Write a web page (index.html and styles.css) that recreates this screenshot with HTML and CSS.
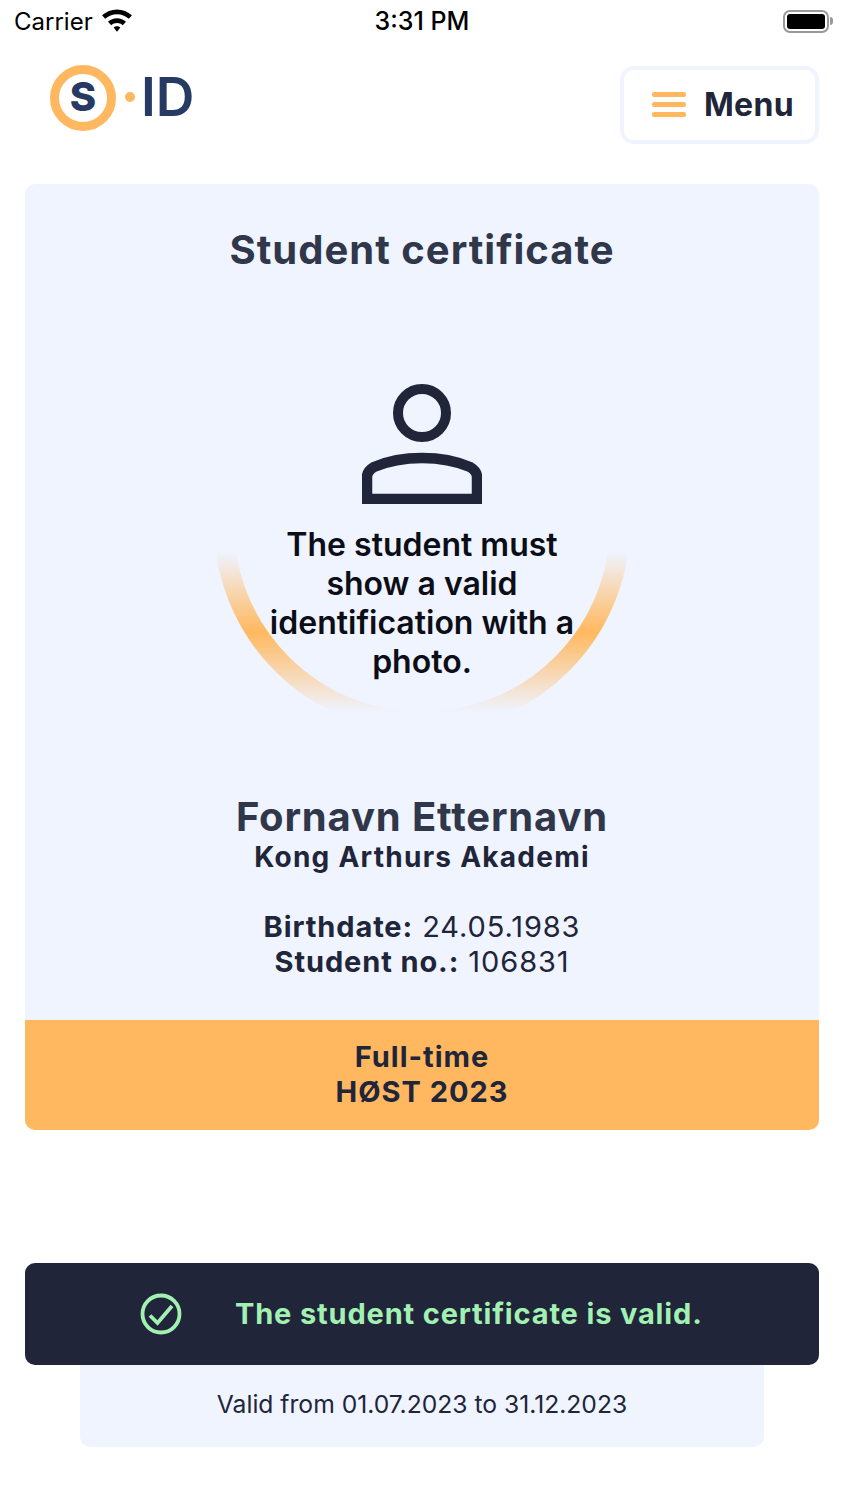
FILE: index.html
```html
<!DOCTYPE html>
<html lang="en">
<head>
    <meta charset="UTF-8">
    <meta name="viewport" content="width=device-width, initial-scale=1.0">
    <title>Student certificate</title>
    <link rel="stylesheet" href="styles.css">
</head>
<body>
    <!-- Status bar -->
    <div class="status-bar">
        <div class="status-left">
            <span class="carrier">Carrier</span>
            <svg class="wifi" width="36" height="27" viewBox="0 0 32 24">
                <path d="M16 3c5 0 9.700 2 13.300 5.300l-2.800 3.100c-2.800-2.600-6.500-4.100-10.500-4.100s-7.700 1.500-10.500 4.100L2.700 8.300C6.300 5 11 3 16 3z" fill="#000"/>
                <path d="M16 10.800c3 0 5.800 1.100 8 3.100l-2.900 3.100c-1.300-1.200-3.100-2-5.100-2s-3.800.8-5.100 2L8 13.900c2.200-2 5-3.100 8-3.100z" fill="#000"/>
                <path d="M16 18c1.100 0 2.200.4 3 1.100L16 22.800l-3-3.700c.8-.7 1.900-1.100 3-1.100z" fill="#000"/>
            </svg>
        </div>
        <span class="time">3:31 PM</span>
        <div class="battery">
            <div class="battery-body"><div class="battery-fill"></div></div>
            <div class="battery-cap"></div>
        </div>
    </div>

    <!-- Logo and menu -->
    <header class="top-bar">
        <svg class="logo" width="146" height="68" viewBox="0 0 146 68">
            <circle cx="34" cy="34" r="28.500" fill="none" stroke="#ffb85f" stroke-width="9"/>
            <text x="34" y="47" text-anchor="middle" class="logo-s">S</text>
            <circle cx="81" cy="33" r="5" fill="#ffb85f"/>
            <text x="92" y="52" class="logo-id">ID</text>
        </svg>
        <button class="menu-btn">
            <span class="burger"><i></i><i></i><i></i></span>
            <span>Menu</span>
        </button>
    </header>

    <main class="content">
        <section class="card">
            <h1>Student certificate</h1>

            <div class="portrait">
                <svg class="arc" width="424" height="180" viewBox="0 0 424 180">
                    <defs>
                        <linearGradient id="arcFade" x1="0" y1="0" x2="0" y2="1">
                            <stop offset="0" stop-color="#ffb85f" stop-opacity="0"/>
                            <stop offset="0.5" stop-color="#ffb85f" stop-opacity="1"/>
                            <stop offset="1" stop-color="#ffb85f" stop-opacity="0"/>
                        </linearGradient>
                        <mask id="arcRing">
                            <circle cx="212" cy="-28" r="198" fill="none" stroke="#fff" stroke-width="20"/>
                        </mask>
                    </defs>
                    <rect x="0" y="0" width="424" height="160" fill="url(#arcFade)" mask="url(#arcRing)"/>
                </svg>
                <svg class="person" width="120" height="120" viewBox="0 0 120 120">
                    <circle cx="60" cy="29" r="24" fill="none" stroke="#20253a" stroke-width="10"/>
                    <path d="M5 115V93c0-4 2-7 7-10C26 77 43 74 60 74s34 3 48 9c5 3 7 6 7 10v22z" fill="none" stroke="#20253a" stroke-width="10.500"/>
                </svg>
                <p class="notice">The student must show a valid identification with a photo.</p>
            </div>

            <div class="student">
                <h2>Fornavn Etternavn</h2>
                <div class="school">Kong Arthurs Akademi</div>
                <div class="facts">
                    <div><b>Birthdate:</b> 24.05.1983</div>
                    <div><b>Student no.:</b> 106831</div>
                </div>
            </div>

            <div class="term">
                <div>Full-time</div>
                <div>HØST 2023</div>
            </div>
        </section>

        <div class="valid-banner">
            <svg width="44" height="44" viewBox="0 0 44 44">
                <circle cx="22" cy="22" r="18.500" fill="none" stroke="#a3f1b2" stroke-width="3.800"/>
                <path d="M11 23.500l7.500 7.500L33 14" fill="none" stroke="#a3f1b2" stroke-width="3.800"/>
            </svg>
            <span>The student certificate is valid.</span>
        </div>
        <div class="valid-dates">Valid from 01.07.2023 to 31.12.2023</div>
    </main>
</body>
</html>
```

FILE: styles.css
```css
html, body {
    margin: 0;
    width: 844px;
    height: 1500px;
    background-color: white;
    font-family: Inter, "Noto Sans", sans-serif;
    color: #20253a;
    overflow: hidden;
}

.status-bar {
    display: grid;
    grid-template-columns: 1fr auto 1fr;
    align-items: center;
    height: 42px;
    padding: 0 14px;
    color: black;
}

.status-left {
    display: flex;
    align-items: center;
    gap: 6px;
}

.carrier {
    font-size: 24px;
}

.wifi {
    margin-top: -4px;
}

.time {
    font-size: 25px;
    font-weight: 500;
}

.battery {
    justify-self: end;
    display: flex;
    align-items: center;
    gap: 1px;
    margin-right: -3px;
}

.battery-body {
    width: 38px;
    height: 15px;
    padding: 2px;
    border: 2px solid #999;
    border-radius: 7px;
}

.battery-fill {
    height: 100%;
    background-color: black;
    border-radius: 3px;
}

.battery-cap {
    width: 3px;
    height: 8px;
    background-color: #999;
    border-radius: 0 3px 3px 0;
}

.top-bar {
    display: flex;
    justify-content: space-between;
    align-items: flex-start;
    padding: 22px 25px 0 49px;
}

.logo-s {
    font-size: 40px;
    font-weight: 800;
    fill: #263a63;
}

.logo-id {
    font-size: 53.500px;
    font-weight: 600;
    fill: #263a63;
}

.menu-btn {
    display: flex;
    align-items: center;
    gap: 18px;
    box-sizing: border-box;
    width: 199px;
    height: 78px;
    margin-top: 2px;
    padding: 0 0 1px 28px;
    background-color: white;
    border: 4px solid #f0f4ff;
    border-radius: 14px;
    font-family: inherit;
    font-size: 32px;
    font-weight: 700;
    letter-spacing: 0.3px;
    color: #20253a;
}

.burger {
    display: flex;
    flex-direction: column;
    gap: 5px;
}

.burger i {
    display: block;
    width: 34px;
    height: 5px;
    background-color: #ffb85f;
    border-radius: 2px;
}

.content {
    padding: 40px 25px 0;
}

.card {
    background-color: #f0f4ff;
    border-radius: 10px;
    overflow: hidden;
    text-align: center;
}

h1 {
    margin: 0;
    padding-top: 42px;
    font-size: 40px;
    line-height: 48px;
    font-weight: 700;
    color: #30374a;
    letter-spacing: 1px;
}

.portrait {
    position: relative;
    display: flex;
    flex-direction: column;
    align-items: center;
    padding-top: 110px;
}

.arc {
    position: absolute;
    left: 185px;
    top: 278px;
}

.person {
    position: relative;
}

.notice {
    position: relative;
    width: 320px;
    margin: 21px 0 0;
    font-size: 32px;
    line-height: 39px;
    font-weight: 600;
    color: #0b0d17;
}

.student {
    padding-top: 112px;
    letter-spacing: 1px;
}

h2 {
    margin: 0;
    font-size: 40px;
    line-height: 48px;
    font-weight: 700;
    letter-spacing: 0.85px;
    color: #30374a;
}

.school {
    font-size: 28px;
    line-height: 32px;
    font-weight: 700;
    letter-spacing: 1.25px;
}

.facts {
    padding-top: 36px;
    font-size: 29px;
    line-height: 35px;
    letter-spacing: 0.9px;
}

.term {
    margin-top: 41px;
    padding: 20px 0 21px;
    background-color: #ffb85f;
    font-size: 29px;
    line-height: 34.500px;
    font-weight: 700;
    letter-spacing: 1px;
}

.valid-banner {
    display: flex;
    align-items: center;
    gap: 52px;
    height: 102px;
    margin-top: 133px;
    padding-left: 114px;
    background-color: #20253a;
    border-radius: 10px;
    color: #a3f1b2;
    font-size: 29px;
    font-weight: 700;
    letter-spacing: 0.85px;
}

.valid-banner span {
    margin-bottom: 2px;
}

.valid-dates {
    margin: 0 55px;
    padding: 22px 0 26px;
    background-color: #f0f4ff;
    border-radius: 0 0 10px 10px;
    text-align: center;
    font-size: 24.650px;
    line-height: 34px;
}
```
